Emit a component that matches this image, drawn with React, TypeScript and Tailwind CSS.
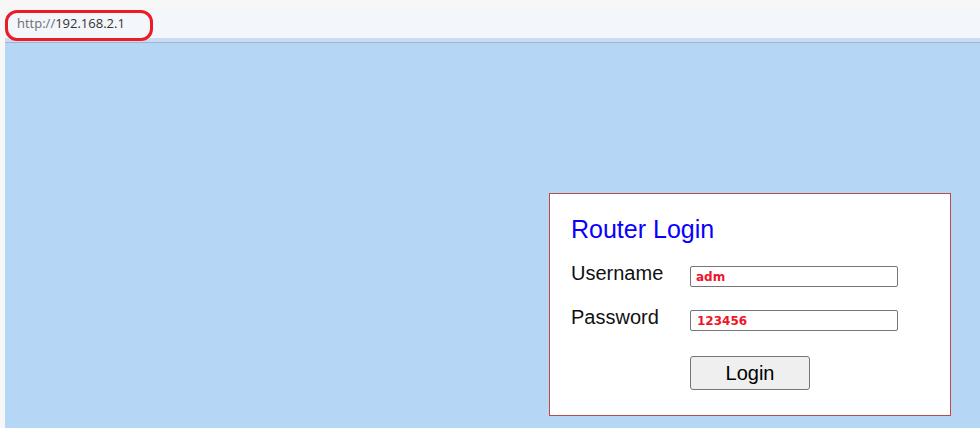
import React from 'react';

const arial = { fontFamily: '"Liberation Sans", Arial, sans-serif' };
const inputFont = { fontFamily: '"DejaVu Sans", Verdana, sans-serif' };

export default function App() {
  return (
    <div className="relative w-[980px] h-[428px] overflow-hidden bg-[#f7f7f7] flex flex-col">
      <div className="h-[10px]" />
      <div className="flex-1 ml-[5px] flex flex-col">
        {/* address bar */}
        <div
          className="h-[28px] bg-[#f3f6fb] flex items-center pl-[12px] text-[13px]"
          style={{ fontFamily: '"Open Sans", "Noto Sans", sans-serif' }}
        >
          <span className="text-[#6f6f6f]">http://</span>
          <span className="text-[#333333]">192.168.2.1</span>
        </div>
        <div className="h-[4px] bg-[#c9dbf5]" />
        <div className="h-px bg-[#a5b3c9]" />

        {/* page */}
        <div className="flex-1 bg-[#b5d6f4] pl-[544px] pt-[150px]">
          <div className="w-[402px] h-[223px] bg-white border border-[#b84a48] pl-[21px] pt-[21px]" style={arial}>
            <h1 className="text-[25px] leading-[28px] text-[#0a00ff]">Router Login</h1>

            <div className="flex items-start mt-[18px]">
              <label className="w-[119px] text-[20px] leading-[24px] text-[#111]">Username</label>
              <div
                className="mt-[5px] w-[208px] h-[21px] border border-[#767676] rounded-[2px] pl-[5px] flex items-center text-[12px] font-bold text-[#f0142a]"
                style={inputFont}
              >
                adm
              </div>
            </div>

            <div className="flex items-start mt-[18px]">
              <label className="w-[119px] text-[20px] leading-[24px] text-[#111]">Password</label>
              <div
                className="mt-[5px] w-[208px] h-[21px] border border-[#767676] rounded-[2px] pl-[6px] flex items-center text-[12px] font-bold text-[#f0142a]"
                style={inputFont}
              >
                123456
              </div>
            </div>

            <div className="pl-[119px] mt-[25px]">
              <button className="w-[120px] h-[34px] bg-[#efefef] border border-[#767676] rounded-[3px] text-[20px] text-black">
                Login
              </button>
            </div>
          </div>
        </div>
      </div>

      {/* red annotation round the url */}
      <div className="absolute left-[5px] top-[10px] w-[148px] h-[31px] border-[3px] border-[#ed1c24] rounded-[12px]" />
    </div>
  );
}
